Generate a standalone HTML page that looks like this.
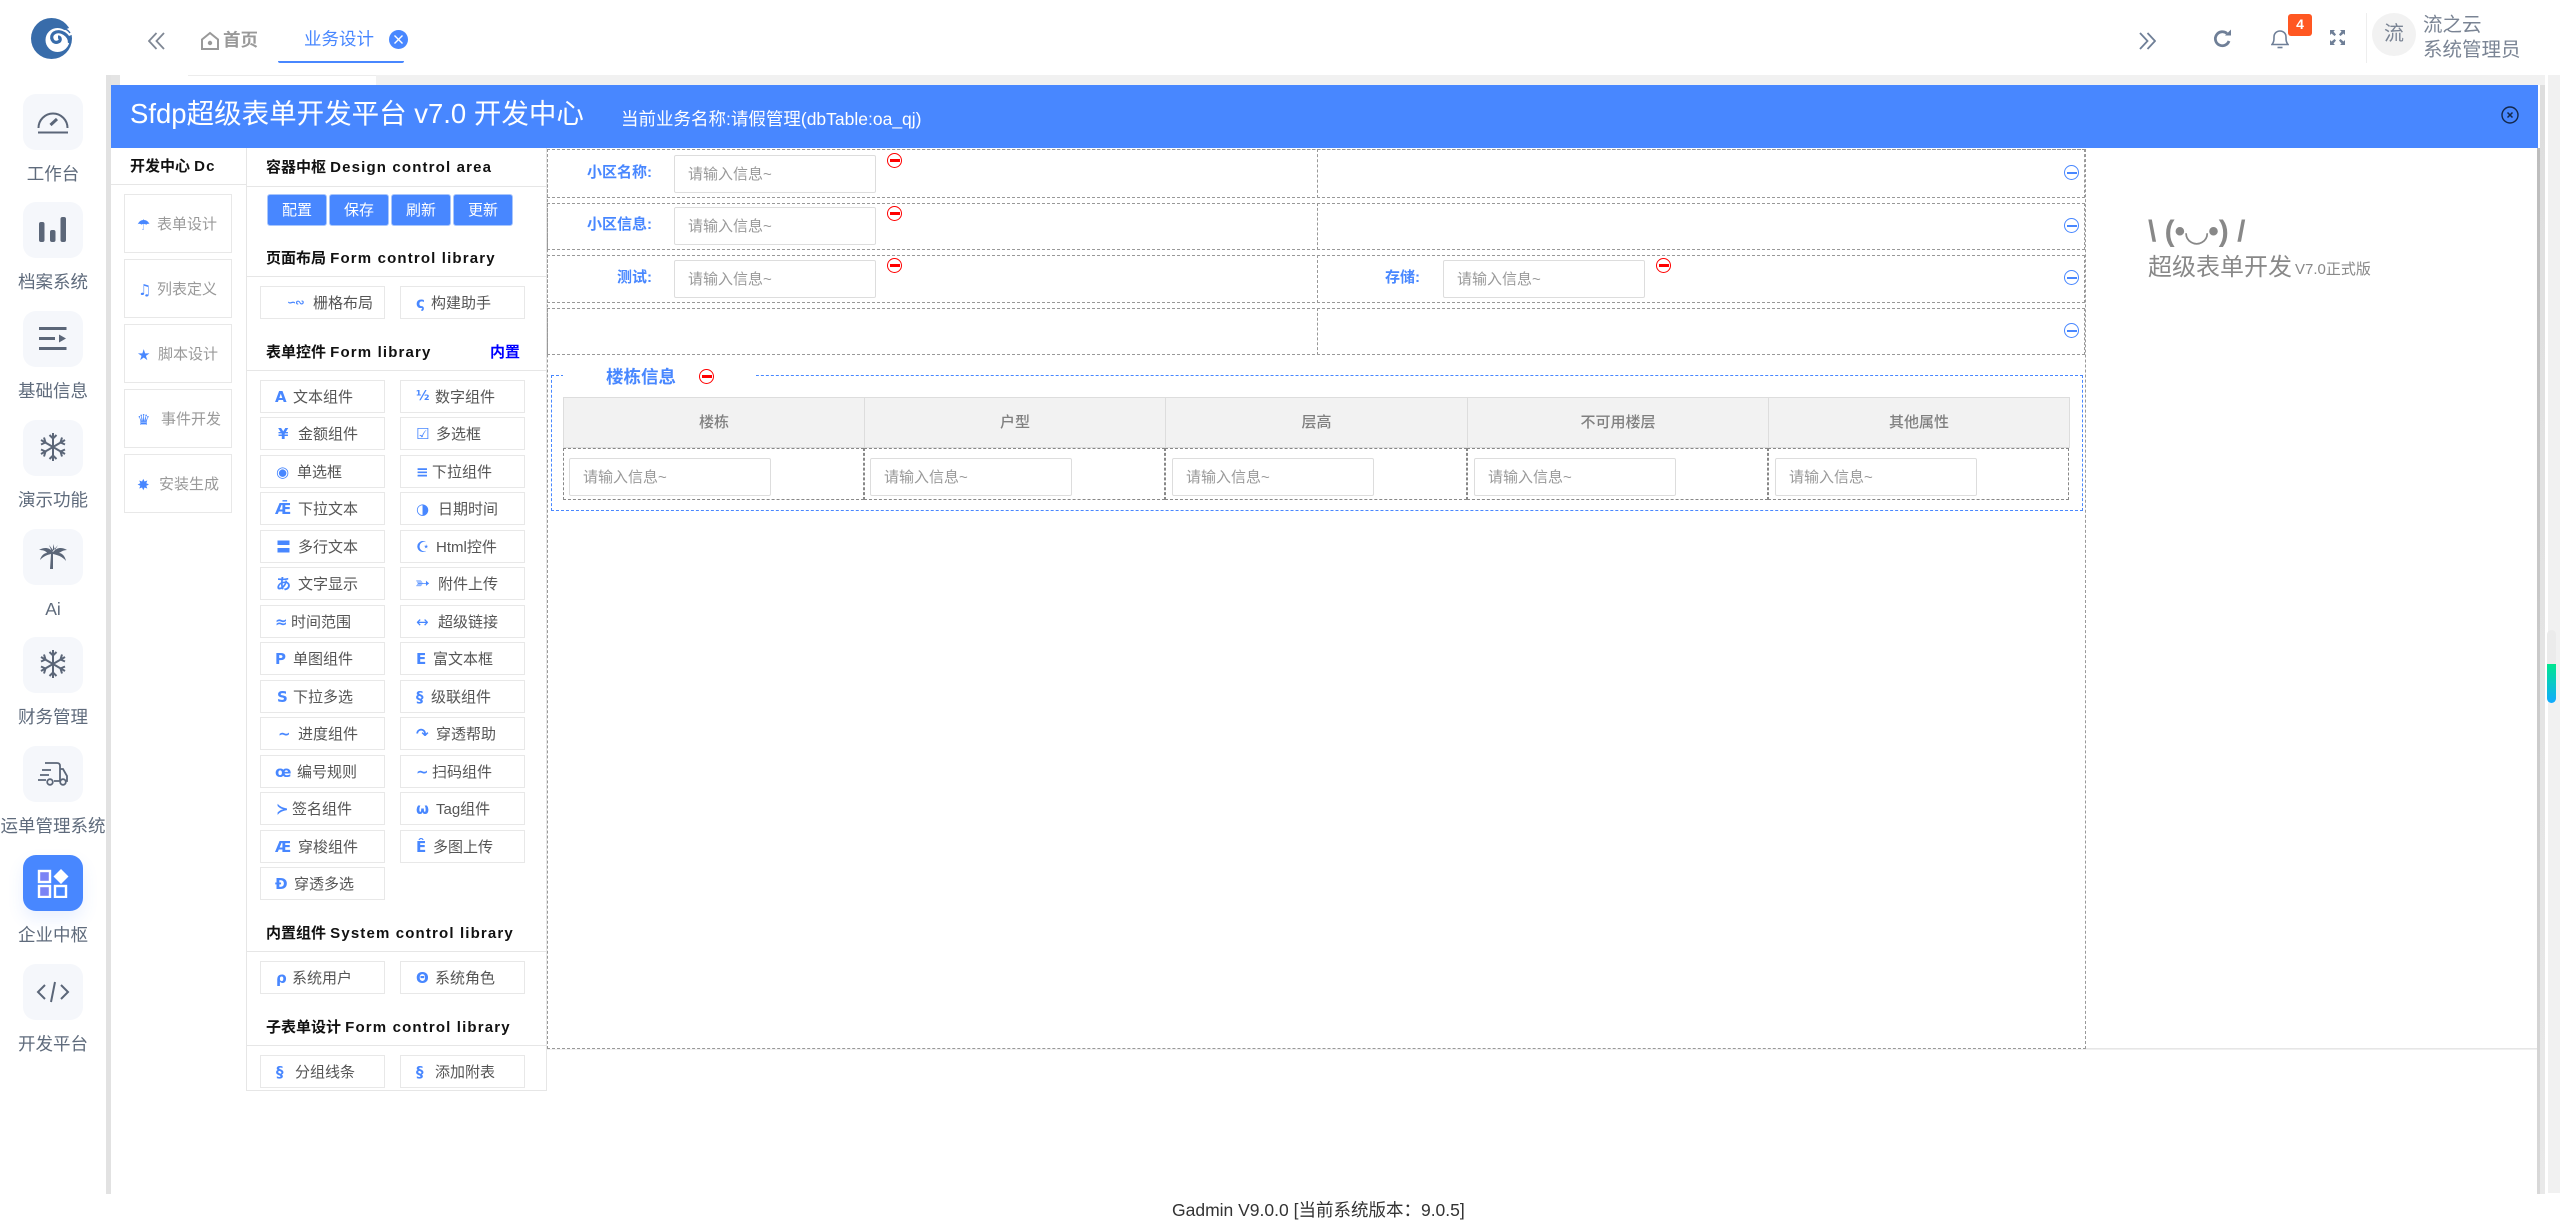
<!DOCTYPE html>
<html lang="zh">
<head>
<meta charset="utf-8">
<title>Sfdp</title>
<style>
html,body{margin:0;padding:0;background:#fff}
body{position:relative;width:2560px;height:1229px;overflow:hidden;font-family:"Liberation Sans","Noto Sans CJK SC",sans-serif;color:#333}
div,span,i,b,svg{position:absolute;box-sizing:border-box}
i{font-style:normal}
.nav{left:23px;width:60px;height:56px;border-radius:13px;background:#f5f7fb}
.nt{left:0;width:106px;text-align:center;font-size:17.5px;line-height:26px;color:#5f6b7c;white-space:nowrap}
.h{left:266px;font-size:15px;font-weight:bold;color:#111;line-height:20px;white-space:nowrap}
.h u{text-decoration:none;letter-spacing:1.15px}
.ln{left:247px;width:299px;height:1px;background:#e6e6e6}
.s{left:124px;width:108px;height:59px;border:1px solid #e8e8e8}
.s i{top:18px;font:bold 15px/24px "DejaVu Sans",sans-serif;color:#4887ff}
.s span{top:19px;font-size:15px;line-height:22px;color:#999;white-space:nowrap}
.bt{top:194px;width:60px;height:32px;background:#4887ff;color:#fff;font-size:15px;line-height:32px;text-align:center;border-radius:3px;border:1px solid #a9c6fb}
.b{width:125px;height:33px;border:1px solid #e8e8e8}
.a{left:260px}.c{left:400px}
.b i{top:4px;font:bold 15px/24px "DejaVu Sans","Noto Sans CJK SC",sans-serif;color:#4887ff;white-space:nowrap}
.b span{top:5px;font-size:15px;line-height:23px;color:#555;white-space:nowrap}
.row{left:547px;width:1538px;border:1px dashed #999}
.v{left:1317px;width:0;border-left:1px dashed #999}
.lb{font-size:15px;font-weight:bold;color:#4887ff;line-height:20px;white-space:nowrap}
.in{width:202px;height:38px;background:#fff;border:1px solid #ddd;border-radius:2px;font-size:15px;line-height:38px;color:#999;padding-left:13px;white-space:nowrap}
.m{width:15px;height:15px;border:1px solid #f00;border-radius:50%;background:#fff}
.m::after{content:"";position:absolute;left:1.5px;right:1.5px;top:5px;height:2.5px;background:#f00}
.m.bl{border-color:#4887ff}
.m.bl::after{background:#4887ff;height:2px;top:5.5px}
.th{top:397px;height:51px;background:#f2f2f2;border:1px solid #ddd;text-align:center;font-size:15px;font-weight:500;line-height:49px;color:#808080}
.td{top:448px;height:52px;border:1px dashed #888}
</style>
</head>
<body>

<!-- app backgrounds -->
<div style="left:106px;top:75px;width:14px;height:1119px;background:#e4e4e4"></div>
<div style="left:120px;top:75px;width:2425px;height:10px;background:#f1f1f1"></div>
<div style="left:120px;top:75px;width:256px;height:10px;background:#fff"></div>
<div style="left:188px;top:75px;width:188px;height:1px;background:#ececec"></div>
<div style="left:2548px;top:75px;width:12px;height:1118px;background:#f1f1f1"></div>
<div style="left:2537px;top:148px;width:3px;height:1046px;background:linear-gradient(#bdbdbd,#d8d8d8)"></div>
<div style="left:2540px;top:85px;width:5px;height:1109px;background:linear-gradient(#dedede,#e9e9e9)"></div>

<!-- sidebar -->
<div style="left:0;top:0;width:106px;height:1229px;background:#fff"></div>
<div style="left:106px;top:0;width:5px;height:1194px;background:#e2e2e2"></div>
<div style="left:106px;top:0;width:5px;height:75px;background:#fff"></div>
<svg style="left:28px;top:14px" width="48" height="48" viewBox="28 14 48 48">
  <circle cx="51.500" cy="38.500" r="20.500" fill="#386caa"/>
  <circle cx="57.500" cy="40" r="12" fill="#fff"/>
  <path d="M74 26L64 30L69 36L74 34Z" fill="#fff"/>
  <path d="M70 33C68 30 66 29 64 29" fill="none" stroke="#386caa" stroke-width="1.500"/>
  <path d="M69.500 43C70 35 60 29 54 33C49 37 53 44 58 42C61 41 61 37 58 37" fill="none" stroke="#386caa" stroke-width="3.200"/>
</svg>

<div class="nav" style="top:94px"></div><div class="nt" style="top:161px">工作台</div>
<svg style="left:36px;top:107px" width="34" height="28" viewBox="0 0 34 28" fill="none" stroke="#5b6678" stroke-width="2"><path d="M2.500 21A14.500 14.500 0 1 1 31.500 21"/><path d="M2 25.500H32"/><path d="M14.500 18L21 12" stroke-width="3"/></svg>

<div class="nav" style="top:202px"></div><div class="nt" style="top:269px">档案系统</div>
<svg style="left:38px;top:216px" width="30" height="28" fill="#5b6678"><rect x="1" y="6" width="5.500" height="20" rx="2"/><rect x="12" y="14" width="5.500" height="12" rx="2"/><rect x="22.500" y="1" width="5.500" height="25" rx="2"/></svg>

<div class="nav" style="top:311px"></div><div class="nt" style="top:378px">基础信息</div>
<svg style="left:38px;top:325px" width="30" height="28" fill="#5b6678"><rect x="1" y="2" width="27.500" height="3"/><rect x="1" y="12" width="16" height="3"/><path d="M21 9.500L28 13.500L21 17.500Z"/><rect x="1" y="22" width="27.500" height="3"/></svg>

<div class="nav" style="top:420px"></div><div class="nt" style="top:487px">演示功能</div>
<svg style="left:38px;top:432px" width="30" height="30" viewBox="-15 -15 30 30" fill="none" stroke="#5b6678" stroke-width="2"><path d="M0-14V14M-12-7L12 7M-12 7L12-7"/><path d="M-3.500-12L0-8.500L3.500-12M-3.500 12L0 8.500L3.500 12M-12-2.500L-7.500-4.500L-9-9.500M12 2.500L7.500 4.500L9 9.500M-12 2.500L-7.500 4.500L-9 9.500M12-2.500L7.500-4.500L9-9.500"/></svg>

<div class="nav" style="top:529px"></div><div class="nt" style="top:596px;left:0">Ai</div>
<svg style="left:38px;top:544px" width="30" height="26" viewBox="0 0 30 26" fill="#5b6678"><path d="M15 8C11 3 6 3 1 6C5 6 8 7 9 9C6 9 3 12 2 16C6 12 9 11 13 10L12 25H15L15 10C19 11 24 12 28 17C27 12 24 9 21 9C24 7 26 6 29 6C24 3 19 3 15 8Z"/><path d="M14 8L11 1L15 6L15 0L17 6L20 1Z"/></svg>

<div class="nav" style="top:637px"></div><div class="nt" style="top:704px">财务管理</div>
<svg style="left:38px;top:649px" width="30" height="30" viewBox="-15 -15 30 30" fill="none" stroke="#5b6678" stroke-width="2"><path d="M0-14V14M-12-7L12 7M-12 7L12-7"/><path d="M-3.500-12L0-8.500L3.500-12M-3.500 12L0 8.500L3.500 12M-12-2.500L-7.500-4.500L-9-9.500M12 2.500L7.500 4.500L9 9.500M-12 2.500L-7.500 4.500L-9 9.500M12-2.500L7.500-4.500L9-9.500"/></svg>

<div class="nav" style="top:746px"></div><div class="nt" style="top:813px">运单管理系统</div>
<svg style="left:37px;top:761px" width="32" height="26" viewBox="0 0 32 26" fill="none" stroke="#5b6678" stroke-width="1.800"><path d="M8 2H20C22 2 23 3 23 5V20H17"/><path d="M23 8H26L30 15V20H28"/><path d="M5 9H14M3 14H12M1 19H9"/><circle cx="13" cy="21" r="2.800"/><circle cx="26" cy="21" r="2.800"/></svg>

<div class="nav" style="top:855px;background:#4887ff;box-shadow:0 8px 16px rgba(72,135,255,.12)"></div><div class="nt" style="top:922px">企业中枢</div>
<svg style="left:37px;top:868px" width="32" height="30" viewBox="0 0 32 30" fill="none" stroke="#fff" stroke-width="2.400"><rect x="2" y="3" width="11" height="11" fill="#7b83f5"/><rect x="2" y="18" width="11" height="11" fill="#7b83f5"/><rect x="18" y="18" width="11" height="11"/><path d="M24 1L31.500 8.500L24 16L16.500 8.500Z" fill="#fff" stroke="none"/></svg>

<div class="nav" style="top:964px"></div><div class="nt" style="top:1031px">开发平台</div>
<svg style="left:36px;top:981px" width="34" height="22" viewBox="0 0 34 22" fill="none" stroke="#5b6678" stroke-width="2"><path d="M9 4L2 11L9 18M25 4L32 11L25 18M19 1L15 21"/></svg>

<!-- top bar -->
<svg style="left:148px;top:32px" width="17" height="18" viewBox="0 0 17 18" fill="none" stroke="#7f8794" stroke-width="1.800"><path d="M8.500 1L1 9L8.500 17M16 1L8.500 9L16 17"/></svg>
<svg style="left:200px;top:31px" width="20" height="20" viewBox="0 0 20 20" fill="none" stroke="#999" stroke-width="2"><path d="M2 8.500L10 2L18 8.500V18H2Z"/><circle cx="10" cy="12" r="1.200" fill="#999"/></svg>
<div style="left:223px;top:27px;font-size:17.500px;font-weight:bold;line-height:26px;color:#999">首页</div>
<div style="left:304px;top:26px;font-size:17.500px;line-height:26px;color:#4887ff">业务设计</div>
<svg style="left:389px;top:30px" width="19" height="19" viewBox="0 0 19 19"><circle cx="9.500" cy="9.500" r="9.500" fill="#4887ff"/><path d="M5.500 5.500L13.500 13.500M13.500 5.500L5.500 13.500" stroke="#fff" stroke-width="1.400"/></svg>
<div style="left:278px;top:61px;width:126px;height:2px;background:#4887ff;border-radius:0 0 2px 2px"></div>

<svg style="left:2139px;top:32px" width="17" height="18" viewBox="0 0 17 18" fill="none" stroke="#6f7f97" stroke-width="1.800"><path d="M1 1L8.500 9L1 17M8.500 1L16 9L8.500 17"/></svg>
<svg style="left:2213px;top:29px" width="20" height="20" viewBox="0 0 20 20" fill="none" stroke="#6f7f97" stroke-width="2.800"><path d="M16 12A7 7 0 1 1 14 4.500"/><path d="M12 6.500H18V0.500Z" fill="#6f7f97" stroke="none"/></svg>
<svg style="left:2271px;top:29px" width="18" height="20" viewBox="0 0 18 20" fill="none" stroke="#6f7f97" stroke-width="1.600"><path d="M1 15.500H17C15 13 15 11 15 8C15 4.500 12.500 2 9 2C5.500 2 3 4.500 3 8C3 11 3 13 1 15.500Z"/><path d="M6.500 18.500H11.500"/></svg>
<div style="left:2288px;top:14px;width:24px;height:22px;background:#ff5722;border-radius:3px;color:#fff;font-size:14px;font-weight:bold;text-align:center;line-height:21px">4</div>
<svg style="left:2330px;top:30px" width="15" height="15" viewBox="0 0 15 15" fill="#6f7f97"><path d="M0 0H5L3.500 1.500L6 4.500L4.500 6L1.500 3.500L0 5ZM15 0V5L13.500 3.500L10.500 6L9 4.500L11.500 1.500L10 0ZM0 15V10L1.500 11.500L4.500 9L6 10.500L3.500 13.500L5 15ZM15 15H10L11.500 13.500L9 10.500L10.500 9L13.500 11.500L15 10Z"/></svg>
<div style="left:2366px;top:13px;width:1px;height:50px;background:#eee"></div>
<div style="left:2372px;top:13px;width:44px;height:43px;border-radius:50%;background:#f2f2f2;color:#7a8494;font-size:20px;line-height:42px;text-align:center">流</div>
<div style="left:2423px;top:12px;font-size:19.500px;line-height:26px;color:#7a8494">流之云</div>
<div style="left:2423px;top:37px;font-size:19.500px;line-height:26px;color:#7a8494;white-space:nowrap">系统管理员</div>

<!-- modal -->
<div style="left:111px;top:85px;width:2427px;height:63px;background:#4887ff"></div>
<div style="left:111px;top:148px;width:2426px;height:1046px;background:#fff"></div>
<div style="left:130px;top:94px;font-size:27.500px;line-height:40px;color:#fff;white-space:nowrap">Sfdp超级表单开发平台 v7.0 开发中心</div>
<div style="left:621px;top:105px;font-size:17.500px;line-height:28px;color:#fff;white-space:nowrap">当前业务名称:请假管理(dbTable:oa_qj)</div>
<svg style="left:2501px;top:106px" width="18" height="18" viewBox="0 0 18 18" fill="none" stroke="#14284a"><circle cx="9" cy="9" r="8" stroke-width="1.400"/><path d="M6.500 6.500L11.500 11.500M11.500 6.500L6.500 11.500" stroke-width="1.500"/></svg>

<!-- column 1 -->
<div style="left:246px;top:148px;width:1px;height:943px;background:#e6e6e6"></div>
<div style="left:111px;top:184px;width:135px;height:1px;background:#e6e6e6"></div>
<div class="h" style="left:130px;top:157px">开发中心 <u>Dc</u></div>
<div class="s" style="top:194px"><i style="left:12px">☂</i><span style="left:32px">表单设计</span></div>
<div class="s" style="top:259px"><i style="left:13px">♫</i><span style="left:32px">列表定义</span></div>
<div class="s" style="top:324px"><i style="left:12px">★</i><span style="left:33px">脚本设计</span></div>
<div class="s" style="top:389px"><i style="left:12px">♛</i><span style="left:36px">事件开发</span></div>
<div class="s" style="top:454px"><i style="left:12px">✸</i><span style="left:34px">安装生成</span></div>

<!-- column 2 -->
<div style="left:546px;top:148px;width:1px;height:943px;background:#e6e6e6"></div>
<div style="left:246px;top:1090px;width:300px;height:1px;background:#e6e6e6"></div>
<div class="h" style="top:158px">容器中枢 <u>Design control area</u></div>
<div class="ln" style="top:186px"></div>
<div class="bt" style="left:267px">配置</div><div class="bt" style="left:329px">保存</div><div class="bt" style="left:391px">刷新</div><div class="bt" style="left:453px">更新</div>
<div class="h" style="top:249px">页面布局 <u>Form control library</u></div>
<div class="ln" style="top:276px"></div>
<div class="b a" style="top:286px"><i style="left:26px;font-size:11px;letter-spacing:-1px">∽∾</i><span style="left:52px">栅格布局</span></div>
<div class="b c" style="top:286px"><i style="left:15px">ς</i><span style="left:30px">构建助手</span></div>
<div class="h" style="top:343px">表单控件 <u>Form library</u></div>
<div style="left:490px;top:343px;font-size:15px;font-weight:bold;line-height:20px;color:#00f">内置</div>
<div class="ln" style="top:370px"></div>

<div class="b a" style="top:380px"><i style="left:14px">A</i><span style="left:32px">文本组件</span></div>
<div class="b c" style="top:380px"><i style="left:15px;font-size:13px">½</i><span style="left:34px">数字组件</span></div>
<div class="b a" style="top:417px"><i style="left:17px">¥</i><span style="left:37px">金额组件</span></div>
<div class="b c" style="top:417px"><i style="left:15px">☑</i><span style="left:35px">多选框</span></div>
<div class="b a" style="top:455px"><i style="left:15px">◉</i><span style="left:36px">单选框</span></div>
<div class="b c" style="top:455px"><i style="left:15px">≡</i><span style="left:31px">下拉组件</span></div>
<div class="b a" style="top:492px"><i style="left:14px">Ǣ</i><span style="left:37px">下拉文本</span></div>
<div class="b c" style="top:492px"><i style="left:15px">◑</i><span style="left:37px">日期时间</span></div>
<div class="b a" style="top:530px"><i style="left:15px">〓</i><span style="left:37px">多行文本</span></div>
<div class="b c" style="top:530px"><i style="left:15px">☪</i><span style="left:35px">Html控件</span></div>
<div class="b a" style="top:567px"><i style="left:15px">あ</i><span style="left:37px">文字显示</span></div>
<div class="b c" style="top:567px"><i style="left:14px;font-size:18px">➳</i><span style="left:37px">附件上传</span></div>
<div class="b a" style="top:605px"><i style="left:14px">≈</i><span style="left:30px">时间范围</span></div>
<div class="b c" style="top:605px"><i style="left:15px;font-weight:normal">↔</i><span style="left:37px">超级链接</span></div>
<div class="b a" style="top:642px"><i style="left:14px">P</i><span style="left:32px">单图组件</span></div>
<div class="b c" style="top:642px"><i style="left:15px">E</i><span style="left:32px">富文本框</span></div>
<div class="b a" style="top:680px"><i style="left:16px">S</i><span style="left:32px">下拉多选</span></div>
<div class="b c" style="top:680px"><i style="left:15px">§</i><span style="left:30px">级联组件</span></div>
<div class="b a" style="top:717px"><i style="left:17px">~</i><span style="left:37px">进度组件</span></div>
<div class="b c" style="top:717px"><i style="left:15px">↷</i><span style="left:35px">穿透帮助</span></div>
<div class="b a" style="top:755px"><i style="left:14px">œ</i><span style="left:36px">编号规则</span></div>
<div class="b c" style="top:755px"><i style="left:15px">~</i><span style="left:31px">扫码组件</span></div>
<div class="b a" style="top:792px"><i style="left:15px">≻</i><span style="left:31px">签名组件</span></div>
<div class="b c" style="top:792px"><i style="left:15px">ω</i><span style="left:35px">Tag组件</span></div>
<div class="b a" style="top:830px"><i style="left:14px">Æ</i><span style="left:37px">穿梭组件</span></div>
<div class="b c" style="top:830px"><i style="left:15px">Ê</i><span style="left:32px">多图上传</span></div>
<div class="b a" style="top:867px"><i style="left:14px">Đ</i><span style="left:33px">穿透多选</span></div>

<div class="h" style="top:924px">内置组件 <u>System control library</u></div>
<div class="ln" style="top:951px"></div>
<div class="b a" style="top:961px"><i style="left:15px">ρ</i><span style="left:31px">系统用户</span></div>
<div class="b c" style="top:961px"><i style="left:15px">Θ</i><span style="left:34px">系统角色</span></div>
<div class="h" style="top:1018px">子表单设计 <u>Form control library</u></div>
<div class="ln" style="top:1045px"></div>
<div class="b a" style="top:1055px"><i style="left:15px">§</i><span style="left:34px">分组线条</span></div>
<div class="b c" style="top:1055px"><i style="left:15px">§</i><span style="left:34px">添加附表</span></div>

<!-- canvas -->
<div style="left:547px;top:149px;width:1539px;height:900px;border:1px dashed #999"></div>
<div style="left:2086px;top:1048px;width:451px;height:1px;background:#e6e6e6"></div>
<div style="left:547px;top:1049px;width:1990px;height:1px;background:#f0f0f0"></div>

<div class="row" style="top:149px;height:49px"></div>
<div class="row" style="top:203px;height:47px"></div>
<div class="row" style="top:255px;height:48px"></div>
<div class="row" style="top:308px;height:47px"></div>
<div class="v" style="top:149px;height:49px"></div>
<div class="v" style="top:203px;height:47px"></div>
<div class="v" style="top:255px;height:48px"></div>
<div class="v" style="top:308px;height:47px"></div>

<div class="lb" style="left:587px;top:163px">小区名称:</div>
<div class="in" style="left:674px;top:155px">请输入信息~</div>
<div class="m" style="left:887px;top:153px"></div>
<div class="m bl" style="left:2064px;top:165px"></div>

<div class="lb" style="left:587px;top:215px">小区信息:</div>
<div class="in" style="left:674px;top:207px">请输入信息~</div>
<div class="m" style="left:887px;top:206px"></div>
<div class="m bl" style="left:2064px;top:218px"></div>

<div class="lb" style="left:617px;top:268px">测试:</div>
<div class="in" style="left:674px;top:260px">请输入信息~</div>
<div class="m" style="left:887px;top:258px"></div>
<div class="lb" style="left:1385px;top:268px">存储:</div>
<div class="in" style="left:1443px;top:260px">请输入信息~</div>
<div class="m" style="left:1656px;top:258px"></div>
<div class="m bl" style="left:2064px;top:270px"></div>
<div class="m bl" style="left:2064px;top:323px"></div>

<!-- fieldset -->
<div style="left:551px;top:375px;width:1532px;height:136px;border:1px dashed #4887ff"></div>
<div style="left:563px;top:370px;width:193px;height:14px;background:#fff"></div>
<div style="left:606px;top:364px;font-size:17.500px;font-weight:bold;line-height:26px;color:#4887ff">楼栋信息</div>
<div class="m" style="left:699px;top:369px"></div>

<div class="th" style="left:563px;width:302px">楼栋</div>
<div class="th" style="left:864px;width:302px">户型</div>
<div class="th" style="left:1165px;width:303px">层高</div>
<div class="th" style="left:1467px;width:302px">不可用楼层</div>
<div class="th" style="left:1768px;width:302px">其他属性</div>
<div class="td" style="left:563px;width:301px"></div>
<div class="td" style="left:864px;width:301px"></div>
<div class="td" style="left:1165px;width:302px"></div>
<div class="td" style="left:1467px;width:301px"></div>
<div class="td" style="left:1768px;width:301px"></div>
<div class="in" style="left:569px;top:458px">请输入信息~</div>
<div class="in" style="left:870px;top:458px">请输入信息~</div>
<div class="in" style="left:1172px;top:458px">请输入信息~</div>
<div class="in" style="left:1474px;top:458px">请输入信息~</div>
<div class="in" style="left:1775px;top:458px">请输入信息~</div>

<!-- right panel -->
<div style="left:2148px;top:212px;font:bold 30px/40px 'Liberation Sans','DejaVu Sans',sans-serif;color:#888;white-space:nowrap">\ (•◡•) /</div>
<div style="left:2148px;top:251px;font-size:24px;line-height:34px;color:#888;white-space:nowrap">超级表单开发</div>
<div style="left:2295px;top:259px;font-size:15px;line-height:22px;color:#888;white-space:nowrap">V7.0正式版</div>

<!-- scroll indicator -->
<div style="left:2547px;top:630px;width:9px;height:34px;background:#ebebeb;border-radius:5px 5px 0 0"></div>
<div style="left:2547px;top:664px;width:9px;height:39px;background:linear-gradient(#00e68f,#11aaff);border-radius:0 0 5px 5px"></div>

<!-- footer -->
<div style="left:1172px;top:1198px;font-size:17.500px;line-height:24px;color:#333;white-space:nowrap">Gadmin V9.0.0 [当前系统版本：9.0.5]</div>

</body>
</html>
